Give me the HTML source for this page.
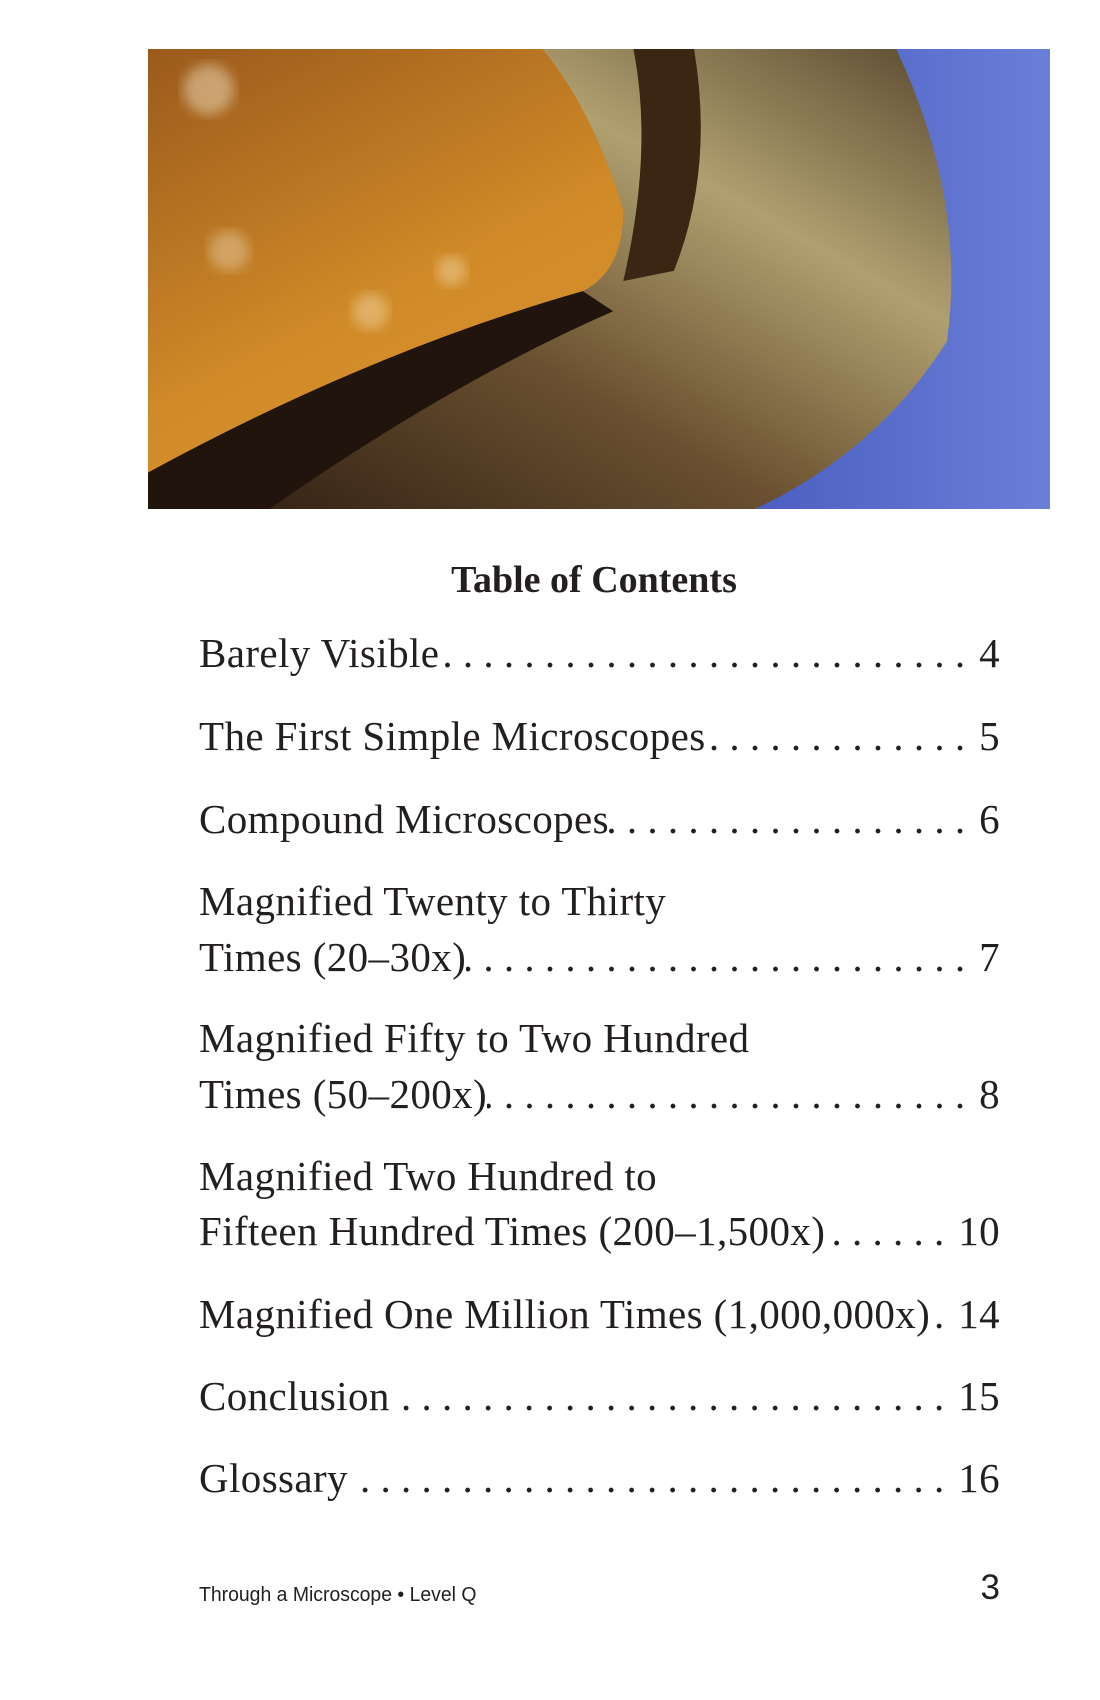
<!DOCTYPE html>
<html><head><meta charset="utf-8"><style>
body{margin:0;width:1100px;height:1700px;background:#fff;position:relative;overflow:hidden;font-family:"Liberation Serif",serif;color:#231f20}
.img{position:absolute;left:148px;top:49px;width:902px;height:460px}
h1{position:absolute;top:555px;left:0;width:1188px;text-align:center;font-size:38px;font-weight:bold;margin:0;line-height:50px}
.row{position:absolute;left:199px;width:801px;display:flex;align-items:baseline;font-size:41px;letter-spacing:.4px;line-height:50px;white-space:nowrap}
.l{flex:1;overflow:hidden;direction:rtl;padding:0 14px 0 12px;letter-spacing:0}
.l span{direction:ltr}
.n{text-align:right}
.t{position:absolute;left:199px;font-size:41px;letter-spacing:.4px;line-height:50px}
.f{position:absolute;left:199px;top:1584px;font-family:"Liberation Sans",sans-serif;font-size:20px;transform:scaleX(.97);transform-origin:left}
.p{position:absolute;right:100px;top:1568px;font-family:"Liberation Sans",sans-serif;font-size:35px}
</style></head><body>
<svg class="img" viewBox="0 0 892 456" preserveAspectRatio="none">
<defs>
<linearGradient id="o" x1="0" y1="0" x2="1" y2="1"><stop offset="0" stop-color="#9a5a1c"/><stop offset=".4" stop-color="#d08a28"/><stop offset="1" stop-color="#e09a30"/></linearGradient>
<linearGradient id="b" x1="0" y1="0" x2="1" y2="0"><stop offset="0" stop-color="#4a5fc0"/><stop offset="1" stop-color="#6a7fd8"/></linearGradient>
<linearGradient id="g" x1="0" y1="1" x2="1" y2="0"><stop offset="0" stop-color="#2a1a10"/><stop offset=".4" stop-color="#6a5030"/><stop offset=".7" stop-color="#b0a070"/><stop offset="1" stop-color="#5a4a30"/></linearGradient>
<filter id="bl"><feGaussianBlur stdDeviation="6"/></filter>
</defs>
<rect width="892" height="456" fill="url(#o)"/>
<circle cx="60" cy="40" r="25" fill="#f0e0c0" opacity=".5" filter="url(#bl)"/>
<circle cx="80" cy="200" r="20" fill="#f0e0c0" opacity=".4" filter="url(#bl)"/>
<circle cx="220" cy="260" r="18" fill="#f8e8c0" opacity=".4" filter="url(#bl)"/>
<circle cx="300" cy="220" r="15" fill="#f8e8c0" opacity=".4" filter="url(#bl)"/>
<rect x="700" width="192" height="456" fill="url(#b)"/>
<path d="M740 0 L892 0 L892 456 L600 456 Q720 380 780 300 Q790 200 740 0Z" fill="url(#b)"/>
<path d="M390 0 L740 0 Q810 150 790 290 Q720 400 600 456 L0 456 L0 420 Q220 300 430 240 Q470 220 470 160 Q440 60 390 0Z" fill="url(#g)"/>
<path d="M0 456 L0 420 Q220 300 430 240 L460 260 Q300 330 120 456Z" fill="#20140c"/>
<path d="M480 0 L540 0 Q560 120 520 220 L470 230 Q500 100 480 0Z" fill="#3a2612"/>
</svg>
<h1>Table of Contents</h1>
<div class="row" style="top:628px"><span>Barely Visible</span><span class="l"><span>. . . . . . . . . . . . . . . . . . . . . . . . . . . . . . . . . . . . . . . . . . . . . . . . . .</span></span><span class="n">4</span></div>
<div class="row" style="top:711px"><span>The First Simple Microscopes</span><span class="l"><span>. . . . . . . . . . . . . . . . . . . . . . . . . . . . . . . . . . . . . . .</span></span><span class="n">5</span></div>
<div class="row" style="top:794px"><span>Compound Microscopes</span><span class="l"><span>. . . . . . . . . . . . . . . . . . . . . . . . . . . . . . . . . . . . . . .</span></span><span class="n">6</span></div>
<div class="t" style="top:876px">Magnified Twenty to Thirty</div>
<div class="row" style="top:932px"><span>Times (20–30x)</span><span class="l"><span>. . . . . . . . . . . . . . . . . . . . . . . . . . . . . . . . . . . . . . . . . . . . .</span></span><span class="n">7</span></div>
<div class="t" style="top:1013px">Magnified Fifty to Two Hundred</div>
<div class="row" style="top:1069px"><span>Times (50–200x)</span><span class="l"><span>. . . . . . . . . . . . . . . . . . . . . . . . . . . . . . . . . . . . . . . . . . . . .</span></span><span class="n">8</span></div>
<div class="t" style="top:1151px">Magnified Two Hundred to</div>
<div class="row" style="top:1206px"><span>Fifteen Hundred Times (200–1,500x)</span><span class="l"><span>. . . . . . . . . . . . . . . . . . . . .</span></span><span class="n">10</span></div>
<div class="row" style="top:1289px"><span>Magnified One Million Times (1,000,000x)</span><span class="l"><span>. . . . . . . . . . . .</span></span><span class="n">14</span></div>
<div class="row" style="top:1371px"><span>Conclusion</span><span class="l"><span>. . . . . . . . . . . . . . . . . . . . . . . . . . . . . . . . . . . . . . . . . . . . .</span></span><span class="n">15</span></div>
<div class="row" style="top:1453px"><span>Glossary</span><span class="l"><span>. . . . . . . . . . . . . . . . . . . . . . . . . . . . . . . . . . . . . . . . . . . . . .</span></span><span class="n">16</span></div>
<div class="f">Through a Microscope • Level Q</div>
<div class="p">3</div>
</body></html>
